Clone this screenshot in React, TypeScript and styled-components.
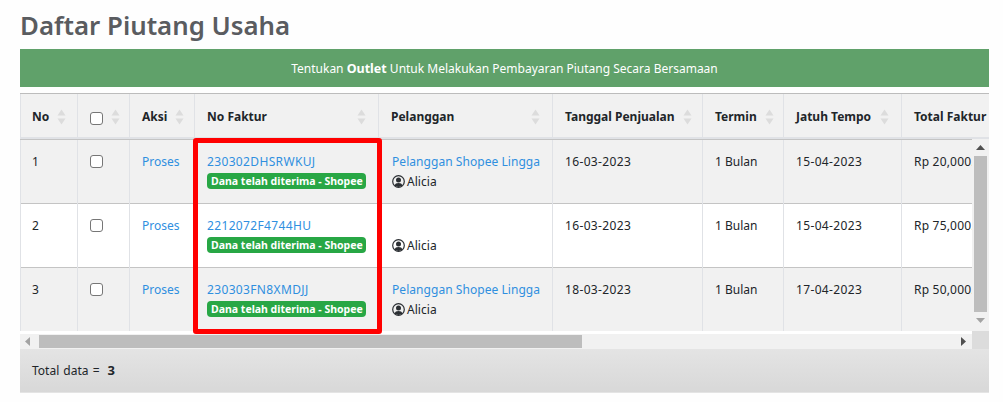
import * as React from "react";
import styled, { createGlobalStyle } from "styled-components";

const GlobalStyle = createGlobalStyle`
  html, body {
    margin: 0;
    background: #fefefe;
    color: #212529;
    font-family: "Noto Sans", "Open Sans", sans-serif;
    font-size: 12px;
  }
  * { box-sizing: border-box; }
`;

const Page = styled.div`
  width: 1003px;
  height: 402px;
  padding: 10px 14px 0 20px;
  overflow: hidden;
`;

const Title = styled.h1`
  margin: 0;
  height: 39px;
  font-size: 25.8px;
  line-height: 30px;
  font-weight: 600;
  color: #5a5c60;
`;

const Banner = styled.div`
  height: 38px;
  margin-bottom: 6px;
  background: #60a16a;
  color: #fff;
  font-size: 12px;
  display: flex;
  align-items: center;
  justify-content: center;
  white-space: pre;
  b { font-size: 12.5px; }
`;

const TableCard = styled.div`
  position: relative;
  width: 969px;
`;

const Viewport = styled.div<{ $w: number }>`
  width: ${(p) => p.$w}px;
  overflow: hidden;
`;

const Table = styled.table`
  table-layout: fixed;
  border-collapse: collapse;
  width: 1010px;
`;

const HeadCell = styled.th`
  height: 44px;
  padding: 3px 12px 0 12px;
  background: #f1f1f1;
  border-top: 1px solid #bcbcbc;
  border-left: 1px solid #e0e2e6;
  border-bottom: 2px solid #e0e2e6;
  text-align: left;
  font-weight: 700;
  font-size: 12px;
  color: #212529;
  white-space: nowrap;
  &:first-child { padding-left: 11px; }
`;

const HeadInner = styled.div`
  display: flex;
  align-items: center;
  justify-content: space-between;
`;

const SortSvg = styled.svg`
  flex: none;
  display: block;
  margin-left: 8px;
`;

const Row = styled.tr<{ $odd: boolean }>`
  background: ${(p) => (p.$odd ? "#f1f1f1" : "#fff")};
`;

const Cell = styled.td<{ $spacing?: number; $pad?: number }>`
  height: 64px;
  padding: 13px 0 0 ${(p) => p.$pad ?? 12}px;
  vertical-align: top;
  border-top: 1px solid #c4c4c4;
  border-left: 1px solid #e0e2e6;
  font-size: 12px;
  line-height: 17px;
  white-space: nowrap;
  overflow: hidden;
  letter-spacing: ${(p) => p.$spacing ?? 0}px;
  &:first-child { padding-left: 11px; }
`;

const Link = styled.a<{ $code?: boolean }>`
  display: block;
  color: #2f8fdf;
  min-height: 17px;
  text-decoration: none;
  letter-spacing: ${(p) => (p.$code ? "0.35px" : "inherit")};
`;

const Badge = styled.span`
  display: inline-block;
  margin-top: 3px;
  height: 16px;
  padding: 0 3px 0 4px;
  border-radius: 4px;
  background: #28a745;
  color: #fff;
  font-size: 10.5px;
  font-weight: 700;
  line-height: 16px;
`;

const Seller = styled.div`
  display: flex;
  align-items: center;
  gap: 2px;
  margin-top: 3px;
`;

const Check = styled.input.attrs({ type: "checkbox" })`
  appearance: none;
  display: block;
  flex: none;
  width: 13px;
  height: 13px;
  margin: 0;
  background: #fff;
  border: 1px solid #767676;
  border-radius: 3px;
`;

const HeadCheck = styled(Check)`
  margin-top: 4px;
`;

const BodyCheck = styled(Check)`
  margin-top: 2px;
`;

const BodyGrid = styled.div`
  display: grid;
  grid-template-columns: 952px 17px;
  grid-template-rows: 192px 18px;
`;

const VBar = styled.div`
  background: #f1f1f1;
  display: flex;
  flex-direction: column;
  align-items: center;
  padding-top: 6px;
`;

const VThumb = styled.div`
  width: 13px;
  height: 156px;
  margin: 6px 0 6px;
  background: #bdbdbd;
`;

const HBar = styled.div`
  background: #f1f1f1;
  border-top: 3px solid #fff;
  display: flex;
  align-items: center;
  padding-left: 5px;
`;

const HThumb = styled.div`
  width: 543px;
  height: 13px;
  margin: 0 auto 0 9px;
  background: #bdbdbd;
`;

const HArrow = styled.svg`
  flex: none;
  margin-right: 6px;
`;

const Corner = styled.div`
  background: #dcdcdc;
`;

const Footer = styled.div`
  height: 44px;
  padding-left: 12px;
  display: flex;
  align-items: center;
  gap: 8px;
  font-size: 12px;
  word-spacing: 1px;
  background: linear-gradient(#e4e4e4, #d8d8d8);
  border-bottom: 1px solid #e4e4e4;
  b { font-size: 13px; }
`;

const Highlight = styled.div`
  position: absolute;
  left: 173px;
  top: 45px;
  width: 189px;
  height: 196px;
  border: 5px solid #f00;
  border-radius: 3px;
  pointer-events: none;
`;

const widths = [57, 52, 65, 184, 174, 150, 81, 118, 129];

const Cols = () => (
  <colgroup>
    {widths.map((w, i) => (
      <col key={i} style={{ width: w }} />
    ))}
  </colgroup>
);

const SortIcon = () => (
  <SortSvg width="9" height="16" viewBox="0 0 9 16">
    <path d="M4.5 0.5L8.5 6.5H0.5Z" fill="#dcdcdc" />
    <path d="M4.5 15.5L8.5 9.5H0.5Z" fill="#dcdcdc" />
  </SortSvg>
);

const UserIcon = () => (
  <svg width="13" height="13" viewBox="0 0 13 13">
    <circle cx="6.5" cy="6.5" r="5.8" fill="none" stroke="#2b2f33" strokeWidth="1.2" />
    <circle cx="6.5" cy="4.9" r="2.5" fill="#2b2f33" />
    <path d="M2.6 10.6C3 8.6 4.4 7.9 6.5 7.9S10 8.6 10.4 10.6C9.4 11.6 8 12 6.5 12S3.6 11.6 2.6 10.6Z" fill="#2b2f33" />
  </svg>
);

const heads = ["No", "", "Aksi", "No Faktur", "Pelanggan", "Tanggal Penjualan", "Termin", "Jatuh Tempo", "Total Faktur"];

const rows = [
  { no: 1, faktur: "230302DHSRWKUJ", cust: "Pelanggan Shopee Lingga", jual: "16-03-2023", tempo: "15-04-2023", total: "Rp 20,000.00" },
  { no: 2, faktur: "2212072F4744HU", cust: "", jual: "16-03-2023", tempo: "15-04-2023", total: "Rp 75,000.00" },
  { no: 3, faktur: "230303FN8XMDJJ", cust: "Pelanggan Shopee Lingga", jual: "18-03-2023", tempo: "17-04-2023", total: "Rp 50,000.00" },
];

export default function App() {
  return (
    <Page>
      <GlobalStyle />
      <Title>Daftar Piutang Usaha</Title>
      <Banner>
        Tentukan <b>Outlet</b> Untuk Melakukan Pembayaran Piutang Secara Bersamaan
      </Banner>
      <TableCard>
        <Viewport $w={969}>
          <Table>
            <Cols />
            <thead>
              <tr>
                {heads.map((h, i) => (
                  <HeadCell key={i}>
                    <HeadInner>
                      {i === 1 ? <HeadCheck /> : <span>{h}</span>}
                      {i < 8 && <SortIcon />}
                    </HeadInner>
                  </HeadCell>
                ))}
              </tr>
            </thead>
          </Table>
        </Viewport>
        <BodyGrid>
          <Viewport $w={952}>
            <Table>
              <Cols />
              <tbody>
                {rows.map((r) => (
                  <Row key={r.no} $odd={r.no % 2 === 1}>
                    <Cell>{r.no}</Cell>
                    <Cell>
                      <BodyCheck />
                    </Cell>
                    <Cell>
                      <Link>Proses</Link>
                    </Cell>
                    <Cell>
                      <Link $code>{r.faktur}</Link>
                      <Badge>Dana telah diterima - Shopee</Badge>
                    </Cell>
                    <Cell $pad={13} $spacing={0.05}>
                      <Link>{r.cust}</Link>
                      <Seller>
                        <UserIcon />
                        Alicia
                      </Seller>
                    </Cell>
                    <Cell $spacing={0.35}>{r.jual}</Cell>
                    <Cell>1 Bulan</Cell>
                    <Cell $spacing={0.35}>{r.tempo}</Cell>
                    <Cell $spacing={0.2}>{r.total}</Cell>
                  </Row>
                ))}
              </tbody>
            </Table>
          </Viewport>
          <VBar>
            <svg width="9" height="5" viewBox="0 0 9 5">
              <path d="M4.5 0L9 5H0Z" fill="#505050" />
            </svg>
            <VThumb />
            <svg width="9" height="5" viewBox="0 0 9 5">
              <path d="M4.5 5L9 0H0Z" fill="#a3a3a3" />
            </svg>
          </VBar>
          <HBar>
            <svg width="5" height="9" viewBox="0 0 5 9">
              <path d="M0 4.5L5 0V9Z" fill="#a3a3a3" />
            </svg>
            <HThumb />
            <HArrow width="5" height="9" viewBox="0 0 5 9">
              <path d="M5 4.5L0 0V9Z" fill="#505050" />
            </HArrow>
          </HBar>
          <Corner />
        </BodyGrid>
        <Footer>
          <span>Total data =</span>
          <b>3</b>
        </Footer>
        <Highlight />
      </TableCard>
    </Page>
  );
}
